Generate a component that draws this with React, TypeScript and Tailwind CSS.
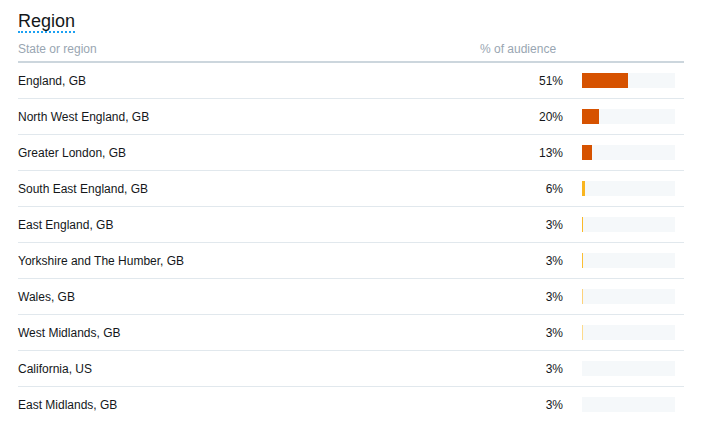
const rows = [
  { name: "England, GB", pct: "51%", width: 46, color: "#d65200" },
  { name: "North West England, GB", pct: "20%", width: 17, color: "#d65200" },
  { name: "Greater London, GB", pct: "13%", width: 10, color: "#d65200" },
  { name: "South East England, GB", pct: "6%", width: 3, color: "#f9b520" },
  { name: "East England, GB", pct: "3%", width: 1, color: "#fab928" },
  { name: "Yorkshire and The Humber, GB", pct: "3%", width: 1, color: "#fbbf33" },
  { name: "Wales, GB", pct: "3%", width: 1, color: "#fdd27a" },
  { name: "West Midlands, GB", pct: "3%", width: 1, color: "#fddb8c" },
  { name: "California, US", pct: "3%", width: 0, color: "#fddb8c" },
  { name: "East Midlands, GB", pct: "3%", width: 0, color: "#fddb8c" },
];

function Bar({ width, color }: { width: number; color: string }) {
  return (
    <div className="ml-[19px] mr-[9px] flex h-[15px] w-[93px] bg-[#f5f8fa]">
      <div className="h-full" style={{ width, backgroundColor: color }} />
    </div>
  );
}

export default function App() {
  return (
    <div className="min-h-screen w-full bg-white pl-[18px] pr-[27px] pt-[10px] font-['Liberation_Sans',Arial,sans-serif] text-[#14171a]">
      <h2 className="inline-block border-b-2 border-dotted border-[#1da1f2] text-[18px] leading-[20px] font-normal">
        Region
      </h2>

      <div className="flex border-b-2 border-[#ccd6dd] pt-[8px] pb-[5px] text-[12px] leading-[14px] text-[#99a6b2]">
        <div className="flex-1">State or region</div>
        <div className="w-[204px]">% of audience</div>
      </div>

      {rows.map((r, i) => (
        <div
          key={r.name}
          className={
            i < rows.length - 1
              ? "flex h-[36px] items-center border-b border-[#e1e8ed] text-[12px] leading-[14px]"
              : "flex h-[35px] items-center text-[12px] leading-[14px]"
          }
        >
          <div className="flex-1">{r.name}</div>
          <div className="w-[60px] text-right">{r.pct}</div>
          <Bar width={r.width} color={r.color} />
        </div>
      ))}
    </div>
  );
}
